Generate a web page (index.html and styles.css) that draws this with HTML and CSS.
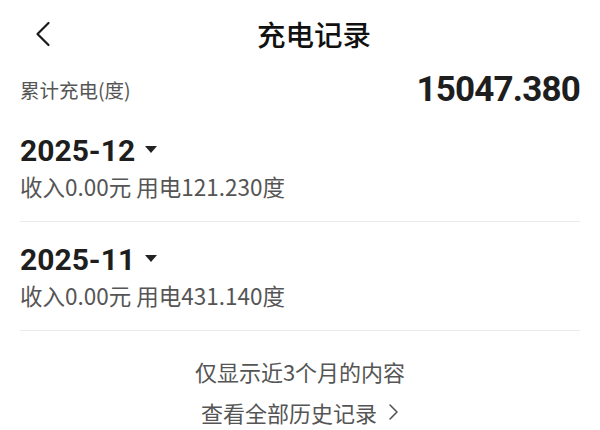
FILE: index.html
```html
<!DOCTYPE html>
<html lang="zh">
<head>
<meta charset="utf-8">
<link rel="stylesheet" href="styles.css">
</head>
<body>
<div class="page">
  <header class="nav">
    <span class="back">
      <svg width="16" height="26" viewBox="0 0 16 26"><path d="M13.5 2 L2.5 13 L13.5 24" fill="none" stroke="#1a1a1a" stroke-width="2.2" stroke-linecap="round" stroke-linejoin="round"/></svg>
    </span>
    <h1 class="title">充电记录</h1>
  </header>
  <div class="total">
    <span class="total-label">累计充电(度)</span>
    <span class="total-value">15047.380</span>
  </div>
  <section class="month">
    <div class="month-head">2025-12<span class="caret"></span></div>
    <div class="month-sub">收入0.00元 用电121.230度</div>
  </section>
  <section class="month">
    <div class="month-head">2025-11<span class="caret"></span></div>
    <div class="month-sub">收入0.00元 用电431.140度</div>
  </section>
  <div class="note">仅显示近3个月的内容</div>
  <div class="more">查看全部历史记录
    <svg width="12" height="20" viewBox="0 0 12 20"><path d="M3 3 L10 10 L3 17" fill="none" stroke="#555" stroke-width="1.6" stroke-linecap="round" stroke-linejoin="round"/></svg>
  </div>
</div>
</body>
</html>
```
FILE: styles.css
```css
html, body { margin: 0; padding: 0; background: #fff; }
body { font-family: "Noto Sans CJK SC", "Noto Sans", sans-serif; color: #1a1a1a; }
.page { width: 600px; height: 430px; padding: 0 20px; box-sizing: border-box; }
.nav { position: relative; height: 69px; display: flex; align-items: center; justify-content: center; padding-left: 28px; }
.back { position: absolute; left: 15px; top: 21px; display: flex; }
.title { margin: 0; font-size: 28.5px; font-weight: 500; line-height: 1; color: #111; }
.total { display: flex; justify-content: space-between; align-items: center; height: 42px; }
.total-label { font-size: 19.5px; color: #555; line-height: 28px; }
.total-value { font-family: "Roboto", "DejaVu Sans", sans-serif; font-weight: 700; font-size: 35px; line-height: 42px; color: #1e1e1e; letter-spacing: -0.8px; }
.month { border-bottom: 1px solid #ebebeb; padding: 22px 0 20px; }
.month + .month { padding-top: 20px; }
.month-head { font-family: "Roboto", "DejaVu Sans", sans-serif; font-weight: 700; font-size: 30px; line-height: 36px; color: #1e1e1e; display: flex; align-items: center; }
.caret { width: 0; height: 0; border-left: 6px solid transparent; border-right: 6px solid transparent; border-top: 7px solid #222; margin-left: 10px; margin-top: -3px; }
.month-sub { font-size: 22.5px; color: #555; line-height: 30px; margin-top: 2px; }
.note { text-align: center; font-size: 22px; color: #555; margin-top: 25px; line-height: 30px; }
.more { font-size: 22px; color: #555; margin-top: 14px; line-height: 24px; display: flex; justify-content: center; align-items: center; gap: 10px; }
```
